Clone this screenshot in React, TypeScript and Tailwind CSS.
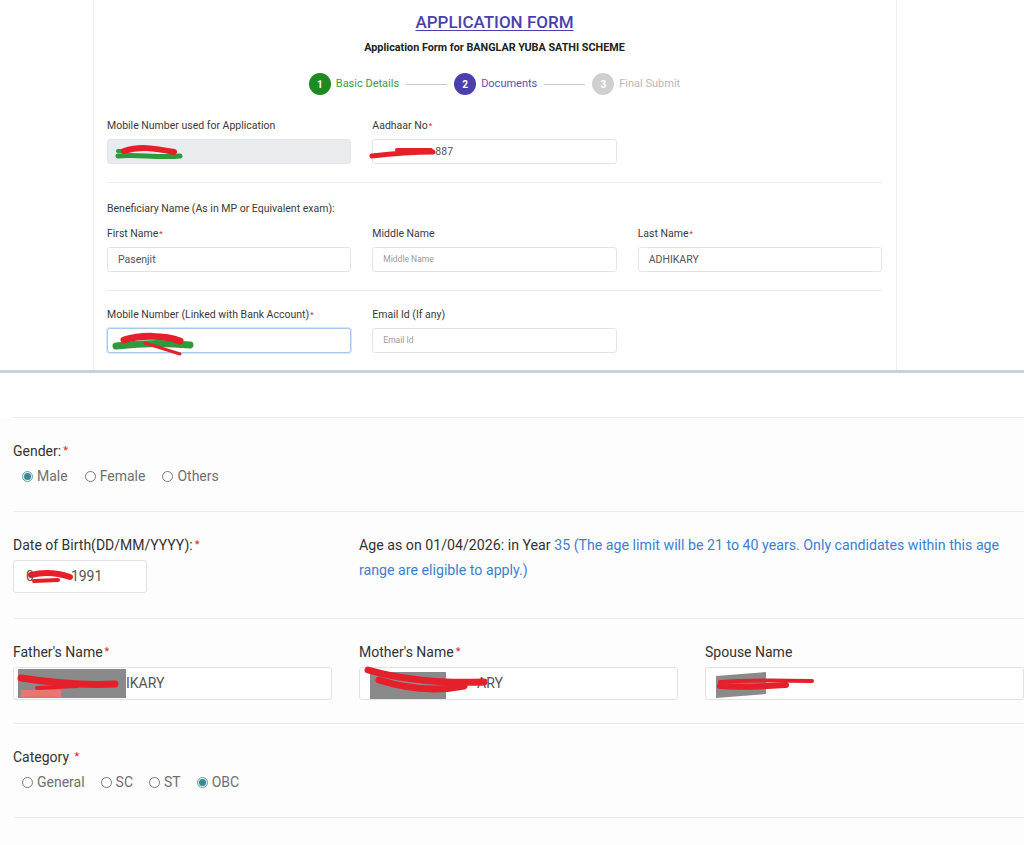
import React from 'react';

const font = { fontFamily: 'Roboto, "Noto Sans", Arial, sans-serif' };

function Req({ small }: { small?: boolean }) {
  return <span className={small ? 'ml-[1px] align-top text-[8px] text-[#d8232a]' : 'ml-[2px] align-top text-[11px] text-[#d8232a]'}>*</span>;
}

function TopLabel({ children, req }: { children: React.ReactNode; req?: boolean }) {
  return (
    <div className="text-[10.5px] leading-[14px] text-[#3a3a3a]">
      {children}
      {req && <Req small />}
    </div>
  );
}

function TopInput({ children, grey, focus, placeholder }: { children?: React.ReactNode; grey?: boolean; focus?: boolean; placeholder?: string }) {
  return (
    <div
      className={
        'relative mt-[6px] flex h-[25px] items-center rounded-[3px] border px-[10px] text-[10.5px] text-[#555] ' +
        (grey ? 'border-[#e3e6ea] bg-[#e9ecef] ' : focus ? 'border-[#a9c8ee] bg-white shadow-[0_0_0_1px_#d6e6f8] ' : 'border-[#e4e4e4] bg-white ')
      }
    >
      {placeholder ? <span className="text-[8.5px] text-[#9a9a9a]">{placeholder}</span> : children}
    </div>
  );
}

function Label({ children, req }: { children: React.ReactNode; req?: boolean }) {
  return (
    <div className="text-[14px] leading-[20px] text-[#333]">
      {children}
      {req && <Req />}
    </div>
  );
}

function Input({ children }: { children?: React.ReactNode }) {
  return (
    <div className="relative mt-[5px] flex h-[33px] items-center rounded-[3px] border border-[#e2e2e2] bg-white px-[12px] text-[14px] text-[#555]">
      {children}
    </div>
  );
}

function Radio({ label, checked }: { label: string; checked?: boolean }) {
  return (
    <div className="flex items-center gap-[4px] text-[14px] leading-[20px] text-[#707070]">
      {checked ? (
        <span className="flex h-[11px] w-[11px] items-center justify-center rounded-full border border-[#6aa4b0] bg-[#e3f0f2]">
          <span className="h-[7px] w-[7px] rounded-full bg-[#3c8795]" />
        </span>
      ) : (
        <span className="h-[11px] w-[11px] rounded-full border border-[#7a7a7a] bg-white" />
      )}
      <span>{label}</span>
    </div>
  );
}

function Divider({ className }: { className: string }) {
  return <div className={'border-t border-[#ececec] ' + className} />;
}

// redaction marker scribbles
function Scribble({ kind }: { kind: 'mob1' | 'aad' | 'mob2' | 'dob' | 'fat' | 'mot' | 'spo' }) {
  if (kind === 'mob1')
    return (
      <svg className="absolute left-[6px] top-[4px]" width="70" height="18" viewBox="0 0 70 18">
        <path d="M4 12 C 20 10, 45 14, 66 12" stroke="#2e9a3c" strokeWidth="5" strokeLinecap="round" fill="none" />
        <path d="M4 7 L 10 7" stroke="#2e9a3c" strokeWidth="4" strokeLinecap="round" />
        <path d="M10 7 C 25 2, 40 4, 60 8" stroke="#e5202a" strokeWidth="6" strokeLinecap="round" fill="none" />
      </svg>
    );
  if (kind === 'aad')
    return (
      <svg className="absolute left-[-4px] top-[6px]" width="70" height="14" viewBox="0 0 70 14">
        <path d="M3 10 C 20 8, 45 6, 64 6" stroke="#e5202a" strokeWidth="5" strokeLinecap="round" fill="none" />
        <path d="M28 4 L 62 4" stroke="#e5202a" strokeWidth="4" strokeLinecap="round" />
      </svg>
    );
  if (kind === 'mob2')
    return (
      <svg className="absolute left-[2px] top-[2px]" width="90" height="26" viewBox="0 0 90 26">
        <path d="M6 15 C 30 12, 60 12, 80 14" stroke="#2e9a3c" strokeWidth="7" strokeLinecap="round" fill="none" />
        <path d="M14 9 C 30 4, 55 4, 70 10" stroke="#e5202a" strokeWidth="7" strokeLinecap="round" fill="none" />
        <path d="M35 12 L 70 23" stroke="#e5202a" strokeWidth="3" strokeLinecap="round" />
      </svg>
    );
  if (kind === 'dob')
    return (
      <svg className="absolute left-[14px] top-[8px]" width="46" height="16" viewBox="0 0 46 16">
        <path d="M3 6 C 15 3, 30 4, 42 8" stroke="#e5202a" strokeWidth="6" strokeLinecap="round" fill="none" />
        <path d="M6 12 L 30 11" stroke="#e5202a" strokeWidth="4" strokeLinecap="round" />
      </svg>
    );
  if (kind === 'fat')
    return (
      <svg className="absolute left-[3px] top-[0px]" width="115" height="32" viewBox="0 0 115 32">
        <rect x="1" y="1" width="108" height="29" fill="#8a8a8a" />
        <rect x="4" y="22" width="40" height="7" fill="#e8776f" />
        <path d="M4 10 C 30 14, 60 18, 98 16" stroke="#e5202a" strokeWidth="7" strokeLinecap="round" fill="none" />
        <path d="M20 20 L 60 18" stroke="#e5202a" strokeWidth="4" strokeLinecap="round" />
      </svg>
    );
  if (kind === 'mot')
    return (
      <svg className="absolute left-[4px] top-[-2px]" width="130" height="34" viewBox="0 0 130 34">
        <rect x="6" y="6" width="76" height="27" fill="#8a8a8a" />
        <path d="M4 4 C 25 10, 60 18, 120 16" stroke="#e5202a" strokeWidth="7" strokeLinecap="round" fill="none" />
        <path d="M15 14 C 40 22, 70 26, 100 20" stroke="#e5202a" strokeWidth="7" strokeLinecap="round" fill="none" />
      </svg>
    );
  return (
    <svg className="absolute left-[8px] top-[2px]" width="110" height="30" viewBox="0 0 110 30">
      <path d="M2 28 L 2 6 L 52 2 L 52 24 Z" fill="#8a8a8a" />
      <path d="M6 12 C 30 10, 60 10, 98 11" stroke="#e5202a" strokeWidth="4" strokeLinecap="round" fill="none" />
      <path d="M6 16 C 30 18, 50 16, 72 15" stroke="#e5202a" strokeWidth="6" strokeLinecap="round" fill="none" />
    </svg>
  );
}

function Step({ n, label, tone }: { n: number; label: string; tone: 'green' | 'purple' | 'grey' }) {
  const circle = tone === 'green' ? 'bg-[#1f8a22]' : tone === 'purple' ? 'bg-[#4b3fae]' : 'bg-[#cfcfcf]';
  const text = tone === 'green' ? 'text-[#3f9a45]' : tone === 'purple' ? 'text-[#5a50b4]' : 'text-[#b8b8b8]';
  return (
    <div className="flex items-center gap-[5px]">
      <span className={'flex h-[22px] w-[22px] items-center justify-center rounded-full text-[10px] font-bold text-white ' + circle}>{n}</span>
      <span className={'text-[11px] ' + text}>{label}</span>
    </div>
  );
}

export default function App() {
  return (
    <div className="min-h-[845px] w-[1024px] overflow-hidden bg-white" style={font}>
      {/* first capture: the web form card */}
      <div className="flex h-[370px] bg-white">
        <div className="ml-[93px] w-[804px] border-x border-[#eeeeee] pl-[13px] pr-[14px]">
          <div className="mt-[12px] text-center text-[17px] leading-[20px] font-medium text-[#4b3fae] underline underline-offset-[2px]">
            APPLICATION FORM
          </div>
          <div className="mt-[9px] text-center text-[10.8px] leading-[14px] font-bold text-[#222]">
            Application Form for BANGLAR YUBA SATHI SCHEME
          </div>
          <div className="mt-[18px] flex items-center justify-center gap-[7px]">
            <Step n={1} label="Basic Details" tone="green" />
            <span className="h-px w-[41px] bg-[#c9c9c9]" />
            <Step n={2} label="Documents" tone="purple" />
            <span className="h-px w-[41px] bg-[#c9c9c9]" />
            <Step n={3} label="Final Submit" tone="grey" />
          </div>

          <div className="mt-[24px] grid grid-cols-3 gap-x-[21px]">
            <div>
              <TopLabel>Mobile Number used for Application</TopLabel>
              <TopInput grey>
                <Scribble kind="mob1" />
              </TopInput>
            </div>
            <div>
              <TopLabel req>Aadhaar No</TopLabel>
              <TopInput>
                <Scribble kind="aad" />
                <span className="ml-[52px]">887</span>
              </TopInput>
            </div>
          </div>

          <Divider className="mt-[18px]" />

          <div className="mt-[19px]">
            <TopLabel>Beneficiary Name (As in MP or Equivalent exam):</TopLabel>
          </div>
          <div className="mt-[11px] grid grid-cols-3 gap-x-[21px]">
            <div>
              <TopLabel req>First Name</TopLabel>
              <TopInput>Pasenjit</TopInput>
            </div>
            <div>
              <TopLabel>Middle Name</TopLabel>
              <TopInput placeholder="Middle Name" />
            </div>
            <div>
              <TopLabel req>Last Name</TopLabel>
              <TopInput>ADHIKARY</TopInput>
            </div>
          </div>

          <Divider className="mt-[18px]" />

          <div className="mt-[17px] grid grid-cols-3 gap-x-[21px]">
            <div>
              <TopLabel req>Mobile Number (Linked with Bank Account)</TopLabel>
              <TopInput focus>
                <Scribble kind="mob2" />
              </TopInput>
            </div>
            <div>
              <TopLabel>Email Id (If any)</TopLabel>
              <TopInput placeholder="Email Id" />
            </div>
          </div>
        </div>
      </div>

      <div className="h-[3px] bg-[#c9d0d9]" />

      {/* second capture: zoomed-in part of the form */}
      <div className="w-[1024px] bg-[#fdfdfd] pb-[28px] pl-[13px]">
        <Divider className="mt-[44px]" />

        <div className="mt-[23px]">
          <Label req>Gender:</Label>
          <div className="mt-[5px] flex items-center gap-[17px] pl-[9px]">
            <Radio label="Male" checked />
            <Radio label="Female" />
            <Radio label="Others" />
          </div>
        </div>

        <Divider className="mt-[25px]" />

        <div className="mt-[23px] grid grid-cols-[319px_319px_319px] gap-x-[27px]">
          <div>
            <Label req>Date of Birth(DD/MM/YYYY):</Label>
            <div className="w-[134px]">
              <Input>
                <Scribble kind="dob" />
                <span>0</span>
                <span className="ml-[37px]">1991</span>
              </Input>
            </div>
          </div>
          <p className="col-span-2 -mt-[2px] text-[14.2px] leading-[25px] text-[#333]">
            Age as on 01/04/2026: in Year <span className="text-[#3d7fd1]">35 (The age limit will be 21 to 40 years. Only candidates within this age range are eligible to apply.)</span>
          </p>
        </div>

        <Divider className="mt-[25px]" />

        <div className="mt-[23px] grid grid-cols-[319px_319px_319px] gap-x-[27px]">
          <div>
            <Label req>Father's Name</Label>
            <Input>
              <Scribble kind="fat" />
              <span className="ml-[100px]">IKARY</span>
            </Input>
          </div>
          <div>
            <Label req>Mother's Name</Label>
            <Input>
              <Scribble kind="mot" />
              <span className="ml-[105px]">ARY</span>
            </Input>
          </div>
          <div>
            <Label>Spouse Name</Label>
            <Input>
              <Scribble kind="spo" />
            </Input>
          </div>
        </div>

        <Divider className="mt-[23px]" />

        <div className="mt-[23px]">
          <div className="text-[14px] leading-[20px] text-[#333]">
            Category <Req />
          </div>
          <div className="mt-[5px] flex items-center gap-[16px] pl-[9px]">
            <Radio label="General" />
            <Radio label="SC" />
            <Radio label="ST" />
            <Radio label="OBC" checked />
          </div>
        </div>

        <Divider className="mt-[25px]" />
      </div>
    </div>
  );
}
